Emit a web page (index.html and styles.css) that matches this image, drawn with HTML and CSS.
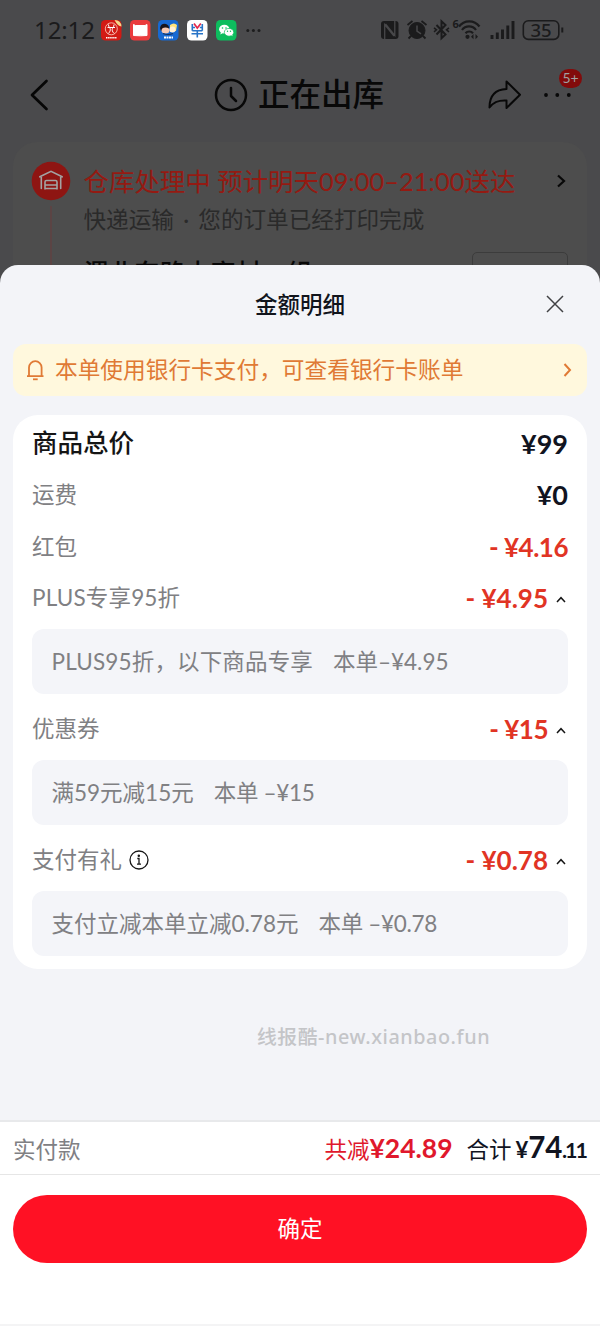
FILE: index.html
```html
<!DOCTYPE html>
<html lang="zh-CN">
<head>
<meta charset="utf-8">
<title>金额明细</title>
<link rel="stylesheet" href="styles.css">
</head>
<body>
<div class="page">
  <div class="backdrop">
    <div class="status">
      <span class="clock">12:12</span>
      <div class="apps">
        <svg width="21" height="21" viewBox="0 0 21 21"><rect width="20.5" height="20.5" rx="4.5" fill="#d21a14"/><circle cx="10.3" cy="8.8" r="6" fill="none" stroke="#ffd9c8" stroke-width=".8"/><path d="M7.500 4.500c0 3 1.800 3 1.800 5s-1 3-2 4M13 4.500c0 3-1.800 3-1.800 5s1 3 2 4M6.500 7.500h7.500" fill="none" stroke="#fff" stroke-width="1"/><path d="M5 17.800h11" stroke="#fff" stroke-width="1.600" stroke-dasharray="1.500 .6"/><path d="M13.500 0q6.500 0 7 6.500-4-.5-7-6.500z" fill="#f3d88b"/></svg>
        <svg width="21" height="21" viewBox="0 0 21 21"><rect width="20.500" height="20.500" rx="4.500" fill="#ea3b3d"/><path d="M3.500 4.500l2 1h9.500l2-1v11q-6.500.6-13.500 0z" fill="#fff" stroke="#fff" stroke-linejoin="round"/></svg>
        <svg width="21" height="21" viewBox="0 0 21 21"><rect width="20.500" height="20.500" rx="4.500" fill="#1769d2"/><path d="M2 8q1-5 6-4 3 1 3 4l-1 3H3z" fill="#18151c"/><ellipse cx="7.500" cy="10.500" rx="4" ry="3" fill="#f6c9b4"/><path d="M12 5q4-3 7 0l-1 6-6 1z" fill="#ffe27a"/><ellipse cx="14.500" cy="9.500" rx="3" ry="3" fill="#fff0d8"/><path d="M5 13.500q5 2 10 0" stroke="#173260" stroke-width="1.200" fill="none"/><path d="M6 17.500h9" stroke="#fff" stroke-width="1.800" stroke-dasharray="2 .5"/></svg>
        <svg width="21" height="21" viewBox="0 0 21 21"><rect width="20.500" height="20.500" rx="4.500" fill="#fff"/><path d="M10.300 10.500v7M4.500 13.800h11.500M5.300 10.800V4M15.300 10.800V4M5.300 10.800h10" fill="none" stroke="#2874c8" stroke-width="1.600"/><path d="M7 3.500l3.300 4.500 3.500-4.500" fill="none" stroke="#e5294d" stroke-width="1.700"/><path d="M5.500 7.500h2.500M12.800 7.500h2.500" stroke="#2874c8" stroke-width="1.400"/></svg>
        <svg width="21" height="21" viewBox="0 0 21 21"><rect width="20.500" height="20.500" rx="4.500" fill="#0dbd5e"/><path d="M4.800 12.500l-.5 2 2.300-1.200z" fill="#fff"/><ellipse cx="8.300" cy="9.200" rx="5.200" ry="4.400" fill="#fff"/><ellipse cx="13" cy="12.300" rx="4.700" ry="3.900" fill="#fff" stroke="#0dbd5e" stroke-width=".7"/><path d="M15 15l1.500 1.300-.3-2z" fill="#fff"/><g fill="#0dbd5e"><circle cx="6.500" cy="8" r=".8"/><circle cx="10" cy="8" r=".8"/><circle cx="11.500" cy="11.300" r=".7"/><circle cx="14.500" cy="11.300" r=".7"/></g></svg>
      </div>
      <svg class="more-small" width="15" height="5" viewBox="0 0 15 5" fill="#1d1d1e"><circle cx="1.800" cy="2.500" r="1.500"/><circle cx="7.400" cy="2.500" r="1.500"/><circle cx="13" cy="2.500" r="1.500"/></svg>
      <svg class="signals" width="188" height="24" viewBox="0 0 188 24" fill="none" stroke="#1b1b1c">
        <rect x="1" y="3" width="17.500" height="18" rx="3" fill="#1b1b1c" stroke="none"/><path d="M4.700 21V6.500L14 18M14.800 3v14.500L5.500 6" stroke="#48484a" stroke-width="1.300"/>
        <circle cx="37" cy="12.500" r="8" fill="#1b1b1c" stroke-width="1"/><path d="M27.500 7l5-4M46.500 7l-5-4M31 18l-2.500 2.500M43 18l2.500 2.500" stroke-width="1.800"/><path d="M37 7.500V13l4 2.800" stroke="#48484a" stroke-width="1.500"/>
        <path d="M56.500 7l9 9.500-4 3.700V3.300l4 3.700-9 9.500" stroke-width="2"/><path d="M54 9.800l2.500 2-2.500 2M69 9.800l-2.500 2 2.500 2" stroke-width="1.500"/>
        <path d="M79 8.500a12.700 12.700 0 0 1 20.500 0M82 12a8.500 8.500 0 0 1 14 0M85.500 15.200a5 5 0 0 1 7.500 0" stroke-width="2.200"/><circle cx="87.500" cy="18.800" r="2.100" fill="#1b1b1c" stroke="none"/><path d="M93.500 16L91 18.800l2.500 2.500zM95.500 16l2.500 2.800-2.500 2.500z" fill="#1b1b1c" stroke="none"/>
        <path d="M112 17v4M117.300 14.500V21M122.500 11.500V21M127.800 7.500V21M133 3v18" stroke-width="2.900"/>
        <rect x="143.300" y="2.800" width="35.500" height="18.600" rx="5" stroke-width="1.600"/><path d="M182.300 9.500v5" stroke-width="2"/>
        <text x="72.500" y="9.500" class="wifi-gen">6</text><text x="150.500" y="18.600" class="battery">35</text>
      </svg>
    </div>
    <div class="nav">
      <svg class="back" width="19" height="32" viewBox="0 0 19 32" fill="none" stroke="#060606" stroke-width="2.700" stroke-linecap="round" stroke-linejoin="round"><path d="M16.500 2L2 16l14.500 14"/></svg>
      <div class="nav-title">
        <svg width="34" height="34" viewBox="0 0 34 34" fill="none" stroke="#080808" stroke-width="2.500" stroke-linecap="round" stroke-linejoin="round"><circle cx="17" cy="17" r="15"/><path d="M17 10v8l5 5"/></svg>
        <span>正在出库</span>
      </div>
      <svg class="share" width="34" height="30" viewBox="0 0 34 30" fill="none" stroke="#080808" stroke-width="2" stroke-linejoin="round"><path d="M18.500 1.500L32 14.700 18.500 28v-7.500C10 20 5.500 22 1.500 27.500 1.500 16.500 7 9.500 18.500 9z"/></svg>
      <div class="menu">
        <svg width="29" height="6" viewBox="0 0 29 6" fill="#080808"><circle cx="3" cy="3" r="1.900"/><circle cx="14.300" cy="3" r="1.900"/><circle cx="25.800" cy="3" r="1.900"/></svg>
        <span class="badge">5+</span>
      </div>
    </div>
    <div class="order">
      <div class="track">
        <svg width="40" height="40" viewBox="0 0 40 40"><circle cx="20" cy="20" r="19.300" fill="#8e1512"/><path d="M8.800 15.800L20 10.300l11.200 5.500M10.300 16v11.500M29.700 16v11.500M14 28v-7q0-1.500 1.500-1.500h9q1.500 0 1.500 1.500v7M14.500 24h11M14.500 27.500h11" fill="none" stroke="#a3a3a3" stroke-width="1.600" stroke-linecap="round"/></svg>
        <div class="track-line"></div>
      </div>
      <div class="order-text">
        <div class="order-status"><span>仓库处理中 预计明天<b>09:00–21:00</b>送达</span>
          <svg width="10" height="14" viewBox="0 0 10 14" fill="none" stroke="#080808" stroke-width="2.200"><path d="M1 1.500L7 7l-6 5.500"/></svg>
        </div>
        <div class="order-sub">快递运输 · 您的订单已经打印完成</div>
        <div class="address"><span>漯北东路水窑村一组</span><i class="edit"></i></div>
      </div>
    </div>
  </div>

  <div class="sheet">
    <div class="sheet-head">
      <h1>金额明细</h1>
      <svg class="close" width="18" height="18" viewBox="0 0 18 18" stroke="#414144" stroke-width="1.500"><path d="M1 1l16 16M17 1L1 17"/></svg>
    </div>
    <div class="notice">
      <svg width="19" height="22" viewBox="0 0 19 22" fill="none" stroke="#e07a35" stroke-width="1.800"><path d="M1 17.200h16.500M3 17V8.500a6.300 6.300 0 0 1 12.600 0V17" stroke-linejoin="round"/><path d="M7 20.300h4.700"/></svg>
      <span class="notice-text">本单使用银行卡支付，可查看银行卡账单</span>
      <svg width="9" height="14" viewBox="0 0 9 14" fill="none" stroke="#e07a35" stroke-width="2"><path d="M1.500 1l5.500 6-5.500 6"/></svg>
    </div>
    <div class="bill">
      <div class="row total"><span>商品总价</span><b class="price wide">¥99</b></div>
      <div class="row"><span>运费</span><b class="price wide">¥0</b></div>
      <div class="row"><span>红包</span><b class="price red tight">- ¥4.16</b></div>
      <div class="row"><span class="plus">PLUS专享95折</span><b class="price red">- ¥4.95</b><svg class="caret" width="10" height="7" viewBox="0 0 10 7"><path d="M1 6l4-4.300L9 6"/></svg></div>
      <div class="detail"><span class="plus">PLUS95折，以下商品专享</span><span>本单–¥4.95</span></div>
      <div class="row"><span>优惠券</span><b class="price red tight">- ¥15</b><svg class="caret" width="10" height="7" viewBox="0 0 10 7"><path d="M1 6l4-4.300L9 6"/></svg></div>
      <div class="detail"><span>满59元减15元</span><span class="narrow">本单 –¥15</span></div>
      <div class="row"><span>支付有礼</span><svg class="info" width="20" height="20" viewBox="0 0 20 20" fill="none" stroke="#171717" stroke-width="1.300"><circle cx="10" cy="10" r="9"/><path d="M8.300 8.500H10v5.500M8 14.200h4" /><circle cx="9.800" cy="5.800" r=".6" fill="#171717"/></svg><b class="price red">- ¥0.78</b><svg class="caret" width="10" height="7" viewBox="0 0 10 7"><path d="M1 6l4-4.300L9 6"/></svg></div>
      <div class="detail"><span>支付立减本单立减0.78元</span><span class="narrow">本单 –¥0.78</span></div>
    </div>
    <div class="watermark">线报酷-new.xianbao.fun</div>
    <div class="summary">
      <span class="paid">实付款</span>
      <span class="saved">共减<b>¥24.89</b></span>
      <span class="sum">合计<b class="yen">¥</b><b class="big">74</b><b class="cents">.11</b></span>
    </div>
    <div class="actions"><button class="confirm">确定</button></div>
  </div>
</div>
</body>
</html>
```

FILE: styles.css
```css
* { box-sizing: border-box; }
body { margin: 0; background: #4a4a4c; font-family: Lato, "Noto Sans CJK SC", sans-serif; }
svg { display: block; flex: none; }
.page { width: 600px; height: 1326px; overflow: hidden; }

.backdrop { height: 265px; overflow: hidden; background: #4a4a4c; color: #080808; }
.status { height: 60px; padding: 0 32px 0 34px; display: flex; align-items: center; }
.clock { font: 400 24px/30px "Noto Sans", sans-serif; letter-spacing: -.1px; width: 67px; color: #1b1b1c; }
.apps { display: flex; gap: 7.7px; }
.more-small { margin-left: 9px; }
.signals { margin-left: auto; overflow: visible; }
.wifi-gen { font: 700 11px "Noto Sans", sans-serif; fill: #1b1b1c; stroke: none; }
.battery { font: 500 18.500px "Noto Sans", sans-serif; fill: #1b1b1c; stroke: none; }

.nav { height: 82px; padding: 0 27px 12px 30px; display: flex; align-items: center; }
.nav-title { margin-left: 165px; width: 272px; display: flex; align-items: center; gap: 10px; font-size: 31.5px; line-height: 44px; font-weight: 500; }
.nav-title span { margin-top: -2px; }
.share { margin-left: 2px; }
.menu { position: relative; margin-left: 21px; }
.badge { position: absolute; left: 16px; top: -23px; width: 23px; height: 19px; border-radius: 10px; background: #820b0b; color: #a1a1a1; font-size: 14px; line-height: 18px; text-align: center; }

.order { height: 200px; margin: 0 13px; padding: 19px 20px 0 18px; border-radius: 24px; background: #4d4d4d; display: flex; }
.track { width: 40px; display: flex; flex-direction: column; align-items: center; }
.track-line { width: 2px; height: 120px; margin-top: 5px; background: #6a3c3c; opacity: .5; }
.order-text { flex: 1; margin-left: 12.500px; white-space: nowrap; }
.order-status { display: flex; align-items: center; justify-content: space-between; font-size: 25.45px; line-height: 40px; color: #941a12; }
.order-status b { font-weight: 400; }
.order-sub { font-size: 22.600px; line-height: 38px; word-spacing: 3.500px; color: #2a2a2a; }
.address { margin-top: 13px; margin-right: -1px; display: flex; justify-content: space-between; font-size: 25.400px; line-height: 40px; font-weight: 500; }
.edit { width: 96px; height: 40px; border: 1px solid #3c3c3c; border-radius: 5px; }

.sheet { height: 1061px; background: #f3f4f8; border-radius: 18px 18px 0 0; display: flex; flex-direction: column; }
.sheet-head { height: 79px; padding: 0 36px 1px 0; display: flex; align-items: center; }
h1 { margin: 1px 0 0 255px; font-size: 22.500px; line-height: 32px; font-weight: 500; color: #11141c; }
.close { margin-left: auto; }
.notice { height: 52px; margin: 0 13px; padding: 0 15px 0 13px; border-radius: 13px; background: #fff8dd; color: #e07a35; display: flex; align-items: center; }
.notice svg { margin-top: -1px; }
.notice-text { flex: 1; margin-left: 10px; font-size: 22.700px; line-height: 34px; white-space: nowrap; }

.bill { height: 554px; margin: 19px 13px 0; padding: 3px 19px 0; border-radius: 25px; background: #fff; color: #808083; font-size: 22.500px; }
.row { height: 51.500px; display: flex; align-items: center; line-height: 34px; }
.total { font-size: 25.500px; font-weight: 500; color: #151515; }
.total > span { margin-top: -4px; }
.price { margin-left: auto; font-size: 26px; font-weight: 700; color: #11141f; }
.wide { font-size: 27px; }
.red { color: #e13424; }
.tight { letter-spacing: -.5px; }
.caret { margin: 2px 2px 0 8px; fill: none; stroke: #151515; stroke-width: 1.500; }
.info { margin-left: 7px; }
.detail { height: 65px; margin: 5px 0 9.500px; padding: 0 20px 3px 19.500px; border-radius: 12px; background: #f4f5f9; display: flex; align-items: center; gap: 20px; white-space: nowrap; }
.plus { letter-spacing: .15px; }
.narrow { letter-spacing: -.3px; }

.watermark { margin: 54px 0 0 257px; font: 500 19.800px/28px "Noto Sans", "Noto Sans CJK SC", sans-serif; letter-spacing: .57px; color: #c4c5c8; white-space: nowrap; }
.summary { height: 55px; margin-top: auto; padding: 0 13px; border-top: 2px solid #e8e9eb; border-bottom: 1px solid #e6e6e6; background: #fff; display: flex; align-items: center; font-size: 22.500px; line-height: 34px; color: #808083; }
.paid { margin-top: 3px; }
.saved { margin-left: auto; margin-top: 2px; color: #e0182c; }
.saved b { font-size: 26.500px; }
.sum { margin-left: 14px; color: #11141f; }
.yen { font-size: 22px; margin-left: 4px; }
.big { font-size: 29.500px; letter-spacing: -.3px; }
.cents { font-size: 21.500px; letter-spacing: -2px; margin-right: 1px; }
.actions { height: 151px; padding: 20px 13px 0; background: #fff; border-bottom: 2px solid #f4f4f5; }
.confirm { display: block; width: 100%; height: 68px; border: 0; border-radius: 34px; background: #ff1124; color: #fff; font: 400 22.500px/34px Lato, "Noto Sans CJK SC", sans-serif; }
```
